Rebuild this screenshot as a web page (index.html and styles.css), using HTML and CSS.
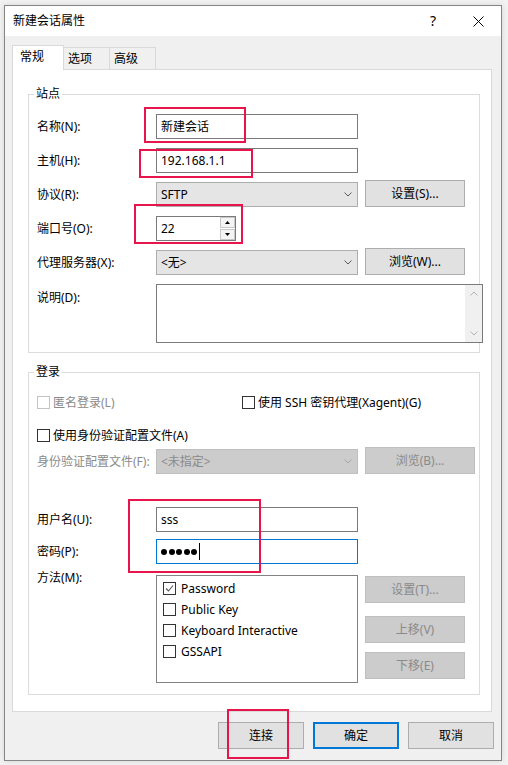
FILE: index.html
```html
<!DOCTYPE html>
<html lang="zh-CN">
<head>
<meta charset="utf-8">
<title>新建会话属性</title>
<link rel="stylesheet" href="styles.css">
</head>
<body>
<div class="dialog">
  <div class="titlebar">
    <span class="title">新建会话属性</span>
    <span class="help">?</span>
    <span class="close"><svg width="11" height="11" viewBox="0 0 11 11"><path d="M0.5 0.5L10.5 10.5M10.5 0.5L0.5 10.5" stroke="#000" stroke-width="1" fill="none"/></svg></span>
  </div>
  <div class="content">
    <div class="tabs">
      <div class="tab active">常规</div>
      <div class="tab">选项</div>
      <div class="tab">高级</div>
    </div>
    <div class="panel">
      <div class="group">
        <div class="legend">站点</div>
        <div class="row first"><span class="label">名称(N):</span><div class="input">新建会话</div></div>
        <div class="row"><span class="label">主机(H):</span><div class="input">192.168.1.1</div></div>
        <div class="row"><span class="label">协议(R):</span><div class="select"><span>SFTP</span><svg class="chev" width="8" height="5" viewBox="0 0 8 5"><path d="M0.5 0.5L4 4L7.5 0.5" fill="none" stroke="#5a5a5a"/></svg></div><button class="btn">设置(S)...</button></div>
        <div class="row"><span class="label">端口号(O):</span><div class="input spin"><span>22</span><div class="spinner"><span><svg width="5" height="3" viewBox="0 0 5 3"><path d="M2.5 0L5 3H0Z" fill="#000"/></svg></span><span><svg width="5" height="3" viewBox="0 0 5 3"><path d="M0 0H5L2.5 3Z" fill="#000"/></svg></span></div></div></div>
        <div class="row"><span class="label">代理服务器(X):</span><div class="select"><span>&lt;无&gt;</span><svg class="chev" width="8" height="5" viewBox="0 0 8 5"><path d="M0.5 0.5L4 4L7.5 0.5" fill="none" stroke="#5a5a5a"/></svg></div><button class="btn">浏览(W)...</button></div>
        <div class="row desc"><span class="label">说明(D):</span>
          <div class="textarea">
            <div class="vscroll">
              <span class="arrow"><svg width="8" height="5" viewBox="0 0 8 5"><path d="M0.5 4.5L4 1L7.5 4.5" fill="none" stroke="#b4b4b4"/></svg></span>
              <span class="arrow"><svg width="8" height="5" viewBox="0 0 8 5"><path d="M0.5 0.5L4 4L7.5 0.5" fill="none" stroke="#b4b4b4"/></svg></span>
            </div>
          </div>
        </div>
      </div>
      <div class="group login">
        <div class="legend">登录</div>
        <div class="cbrow r1">
          <div class="check disabled"><span class="cb"></span><span>匿名登录(L)</span></div>
          <div class="check"><span class="cb"></span><span>使用 SSH 密钥代理(Xagent)(G)</span></div>
        </div>
        <div class="cbrow r2">
          <div class="check"><span class="cb"></span><span>使用身份验证配置文件(A)</span></div>
        </div>
        <div class="row r3"><span class="label disabled">身份验证配置文件(F):</span><div class="select disabled"><span>&lt;未指定&gt;</span><svg class="chev" width="8" height="5" viewBox="0 0 8 5"><path d="M0.5 0.5L4 4L7.5 0.5" fill="none" stroke="#a8a8a8"/></svg></div><button class="btn disabled wide">浏览(B)...</button></div>
        <div class="row r4"><span class="label">用户名(U):</span><div class="input">sss</div></div>
        <div class="row r5"><span class="label">密码(P):</span><div class="input focus"><span class="dots"><i></i><i></i><i></i><i></i><i></i></span><span class="caret"></span></div></div>
        <div class="row method"><span class="label">方法(M):</span>
          <div class="listbox">
            <div class="item"><span class="cb"><svg width="11" height="11" viewBox="0 0 11 11"><path d="M2 5.5L4.5 8L9 2.5" fill="none" stroke="#555" stroke-width="1.1"/></svg></span><span>Password</span></div>
            <div class="item"><span class="cb"></span><span>Public Key</span></div>
            <div class="item"><span class="cb"></span><span>Keyboard Interactive</span></div>
            <div class="item"><span class="cb"></span><span>GSSAPI</span></div>
          </div>
          <div class="side">
            <button class="btn disabled s1">设置(T)...</button>
            <button class="btn disabled s2">上移(V)</button>
            <button class="btn disabled s3">下移(E)</button>
          </div>
        </div>
      </div>
    </div>
    <div class="footer">
      <button class="btn">连接</button>
      <button class="btn default">确定</button>
      <button class="btn">取消</button>
    </div>
  </div>
</div>
<div class="mark m1"></div>
<div class="mark m2"></div>
<div class="mark m3"></div>
<div class="mark m4"></div>
<div class="mark m5"></div>
</body>
</html>
```

FILE: styles.css
```css
* { box-sizing: border-box; }
html, body { margin: 0; padding: 0; }
body {
  width: 508px;
  height: 765px;
  overflow: hidden;
  position: relative;
  background: #f2f2f2;
  padding: 5px 0 0 4px;
  font-family: "Noto Sans", "Noto Sans CJK SC", sans-serif;
  font-size: 12px;
  color: #000;
}
.dialog {
  width: 498px;
  border: 1px solid #858585;
  background: #f0f0f0;
  box-shadow: 0 0 6px rgba(0,0,0,0.12);
}
.titlebar {
  height: 30px;
  background: #fff;
  display: flex;
  align-items: center;
  padding-left: 8px;
}
.title { flex: 1; line-height: 16px; }
.help { width: 14px; text-align: center; font-size: 14px; line-height: 16px; margin-right: 33px; }
.close { width: 11px; height: 11px; display: flex; margin-right: 17px; }

.content {
  padding: 9px 7px 11px 7px;
  display: flex;
  flex-direction: column;
}
.tabs { display: flex; align-items: flex-end; height: 24px; }
.tab {
  width: 47px;
  height: 22px;
  margin-left: -1px;
  border: 1px solid #d9d9d9;
  border-bottom: 0;
  padding: 3px 0 0 4px;
  line-height: 16px;
  background: #f0f0f0;
}
.tab.active {
  width: 52px;
  height: 25px;
  margin: 0 0 -1px 0;
  padding: 3px 0 0 7px;
  background: #fff;
  position: relative;
  z-index: 1;
}
.panel {
  width: 480px;
  background: #fff;
  border: 1px solid #d9d9d9;
  padding: 24px 11px 16px 15px;
}
.group {
  border: 1px solid #dcdcdc;
  padding: 0 11px 9px 8px;
}
.group.login { margin-top: 19px; padding-bottom: 11px; }
.legend {
  display: table;
  background: #fff;
  padding: 0 2px;
  margin: -9px 0 0 -3px;
  height: 16px;
  line-height: 16px;
}
.row {
  display: grid;
  grid-template-columns: 112px 202px 100px;
  column-gap: 7px;
  height: 25px;
  align-items: center;
  margin-top: 9px;
}
.row.first { margin-top: 12px; }
.label { line-height: 16px; white-space: nowrap; }
.disabled { color: #8a8a8a; }
.input {
  height: 25px;
  border: 1px solid #7a7a7a;
  background: #fff;
  padding-left: 4px;
  line-height: 23px;
}
.input.focus { border-color: #0078d7; display: flex; align-items: center; }
.spin { width: 80px; display: flex; justify-content: space-between; }
.spinner { width: 15px; height: 23px; display: flex; flex-direction: column; gap: 1px; }
.spinner span {
  flex: 1;
  border: 1px solid #c8c8c8;
  background: #f4f4f4;
  display: flex;
  align-items: center;
  justify-content: center;
}
.spinner svg { display: block; }
.select {
  height: 25px;
  border: 1px solid #adadad;
  background: #e5e5e5;
  padding: 0 5px 0 4px;
  display: flex;
  align-items: center;
  justify-content: space-between;
  line-height: 16px;
}
.select.disabled { background: #cccccc; border-color: #bfbfbf; }
.chev { display: block; }
.btn {
  height: 27px;
  border: 1px solid #adadad;
  background: #e1e1e1;
  font: inherit;
  color: #000;
  padding: 0;
  line-height: 16px;
  white-space: nowrap;
}
.row .btn { align-self: start; margin-top: -2px; }
.btn.disabled { background: #cccccc; border-color: #bfbfbf; color: #8a8a8a; }
.btn.wide { width: 110px; }
.row.desc { height: 59px; align-items: start; }
.row.desc .label { margin-top: 6px; }
.textarea {
  grid-column: 2 / 4;
  width: 327px;
  height: 59px;
  border: 1px solid #7a7a7a;
  background: #fff;
  display: flex;
  justify-content: flex-end;
}
.vscroll {
  width: 17px;
  height: 100%;
  background: #f0f0f0;
  display: flex;
  flex-direction: column;
  justify-content: space-between;
}
.arrow { height: 17px; display: flex; align-items: center; justify-content: center; }

.cbrow {
  display: grid;
  grid-template-columns: 205px auto;
  height: 13px;
  align-items: center;
}
.cbrow.r1 { margin-top: 16px; }
.cbrow.r2 { margin-top: 20px; }
.check { display: flex; align-items: center; gap: 3px; height: 13px; line-height: 16px; white-space: nowrap; }
.cb {
  width: 13px;
  height: 13px;
  flex: none;
  border: 1px solid #333;
  background: #fff;
  display: flex;
  align-items: center;
  justify-content: center;
}
.check.disabled .cb { border-color: #c4c4c4; }
.row.r3 { margin-top: 7px; }
.row.r4 { margin-top: 33px; }
.row.r5 { margin-top: 7px; }
.dots { display: flex; align-items: center; }
.dots i { width: 6px; height: 6px; border-radius: 50%; background: #000; margin-right: 1.6px; }
.caret { width: 1px; height: 17px; background: #000; margin-left: 0; }
.row.method { height: 108px; align-items: start; margin-top: 11px; }
.row.method .label { margin-top: -5px; }
.listbox {
  height: 108px;
  border: 1px solid #828282;
  background: #fff;
  padding: 2px 0 0 6px;
}
.item { display: flex; align-items: center; gap: 5px; height: 21px; line-height: 16px; }
.side { display: flex; flex-direction: column; }
.side .btn { width: 100px; margin-top: 0; }
.side .s1 { margin-top: 1px; }
.side .s2 { margin-top: 13px; }
.side .s3 { margin-top: 9px; }

.footer {
  display: flex;
  justify-content: flex-end;
  gap: 9px;
  margin-top: 10px;
}
.footer .btn { width: 86px; }
.btn.default { border: 2px solid #0078d7; }

.mark { position: absolute; border: 2px solid #e8144c; }
.m1 { left: 144px; top: 107px; width: 102px; height: 36px; }
.m2 { left: 139px; top: 149px; width: 114px; height: 29px; }
.m3 { left: 134px; top: 204px; width: 109px; height: 40px; }
.m4 { left: 128px; top: 499px; width: 133px; height: 74px; }
.m5 { left: 227px; top: 709px; width: 62px; height: 50px; }
```
